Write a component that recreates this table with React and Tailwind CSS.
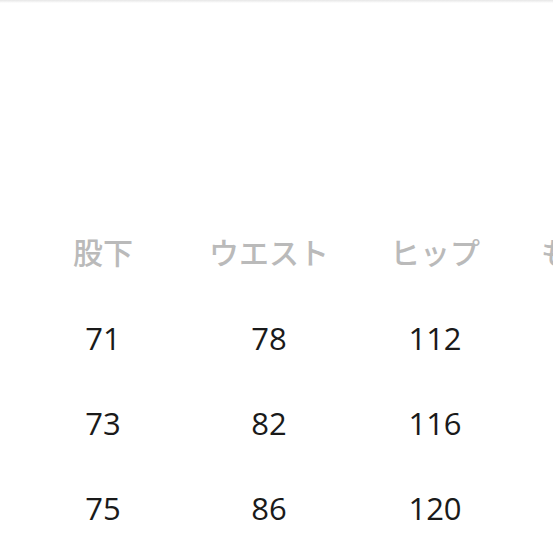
const headers = ['股下', 'ウエスト', 'ヒップ', 'もも周り']
const rows = [
  ['71', '78', '112', ''],
  ['73', '82', '116', ''],
  ['75', '86', '120', ''],
]

export default function App() {
  return (
    <div className="w-[553px] h-[553px] overflow-hidden bg-white relative">
      {/* top edge shadow */}
      <div className="h-[3px] bg-gradient-to-b from-[#e6e6e6] to-white" />
      <div className="pt-[208px] pl-[20px]">
        <div className="grid grid-cols-[repeat(4,166px)] h-[85px] items-center pb-[5px]">
          {headers.map((h) => (
            <div
              key={h}
              className="text-center whitespace-nowrap text-[30px] font-medium text-[#bababa] leading-none"
              style={{ fontFamily: '"Noto Sans CJK JP", sans-serif' }}
            >
              {h}
            </div>
          ))}
        </div>
        {rows.map((r, i) => (
          <div key={i} className="grid grid-cols-[repeat(4,166px)] h-[85px] items-center">
            {r.map((v, j) => (
              <div
                key={j}
                className="text-center text-[31px] text-[#1a1a1a] leading-none font-['Open_Sans',sans-serif]"
              >
                {v}
              </div>
            ))}
          </div>
        ))}
      </div>
    </div>
  )
}
